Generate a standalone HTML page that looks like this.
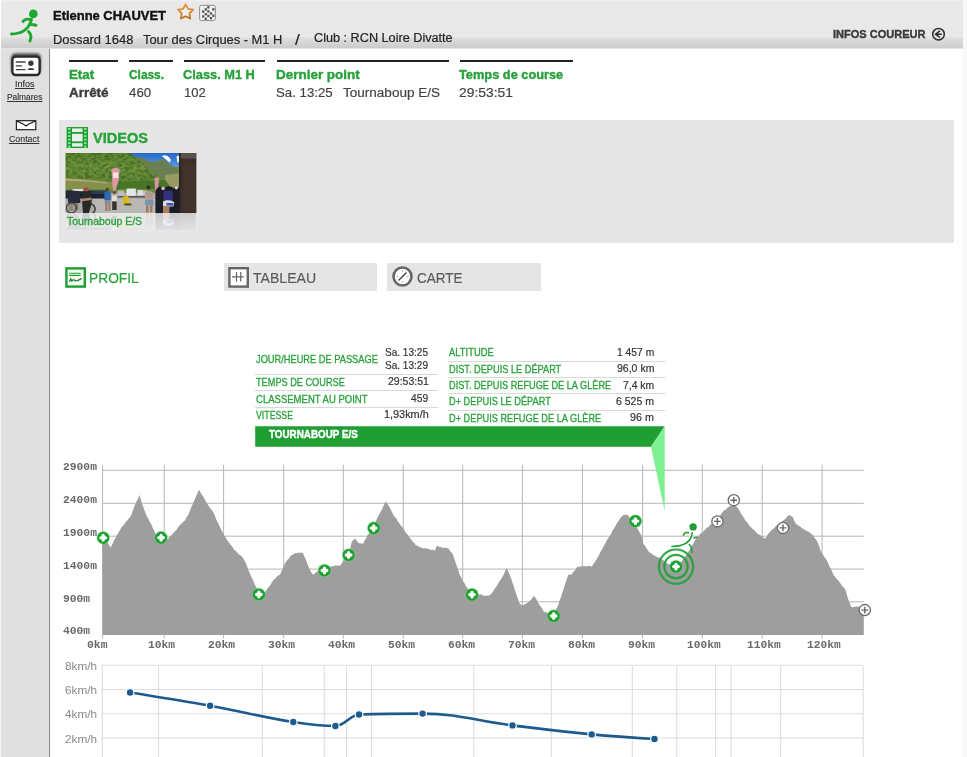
<!DOCTYPE html>
<html lang="fr"><head><meta charset="utf-8"><title>Etienne CHAUVET - Infos coureur</title>
<style>
*{box-sizing:border-box}
html,body{margin:0;padding:0}
body{width:967px;height:757px;overflow:hidden;background:#fff;position:relative;font-family:"Liberation Sans",sans-serif}
.a{position:absolute}
#hdr{left:1px;top:0;width:962px;height:49px;background:linear-gradient(#f2f2f2 0,#e9e9e9 1.5px,#e8e8e8 36.5px,#dddddd 38.5px,#d3d3d3 44px,#cccccc 48px,#e4e4e4 48px,#e4e4e4 49px)}
#side{left:0;top:49px;width:50px;height:708px;background:#e0e0e0;border-right:1px solid #8a8a8a;border-left:1px solid #f4f4f4}
#edge{left:963px;top:0;width:4px;height:757px;background:#f8f8f8}
.bl{height:2px;background:#222;top:60px}
#vid{left:58.5px;top:119.5px;width:895.5px;height:123px;background:#e6e6e6}
.tab{top:262.7px;height:28.6px;background:#e5e5e5}
.sep{height:1px;background:#d9d9d9}
#txt .t{position:absolute;white-space:nowrap;line-height:1;transform-origin:0 0;display:block}
svg{position:absolute;overflow:visible}
#txt .m{font-family:"Liberation Mono",monospace}

</style></head>
<body>
<div id="hdr" class="a"></div>
<div id="edge" class="a"></div>
<div id="side" class="a"></div>
<!-- info underlines -->
<div class="a bl" style="left:69.4px;width:48.9px"></div>
<div class="a bl" style="left:129.4px;width:43.5px"></div>
<div class="a bl" style="left:184px;width:81.4px"></div>
<div class="a bl" style="left:276.6px;width:172.1px"></div>
<div class="a bl" style="left:459.6px;width:113.8px"></div>
<div id="vid" class="a"></div>
<div class="a tab" style="left:223.7px;width:153.7px"></div>
<div class="a tab" style="left:387.3px;width:154px"></div>
<!-- tooltip separators -->
<div class="a sep" style="left:255px;top:374px;width:183px"></div>
<div class="a sep" style="left:255px;top:390.4px;width:183px"></div>
<div class="a sep" style="left:255px;top:407px;width:183px"></div>
<div class="a sep" style="left:448px;top:361px;width:216.6px"></div>
<div class="a sep" style="left:448px;top:377px;width:216.6px"></div>
<div class="a sep" style="left:448px;top:393px;width:216.6px"></div>
<div class="a sep" style="left:448px;top:409.5px;width:216.6px"></div>

<svg id="gfx" width="967" height="757" viewBox="0 0 967 757" style="left:0;top:0">
<path d="M102.5 470.3H863.8 M102.5 503.3H863.8 M102.5 536.2H863.8 M102.5 569.1H863.8 M102.5 601.8H863.8 M102.6 464.8V638.5 M164.2 464.8V638.5 M223.6 464.8V638.5 M283.7 464.8V638.5 M343.3 464.8V638.5 M403.2 464.8V638.5 M462.7 464.8V638.5 M522.4 464.8V638.5 M582.4 464.8V638.5 M642.6 464.8V638.5 M702.3 464.8V638.5 M762.2 464.8V638.5 M822.1 464.8V638.5" stroke="#b6b6b6" stroke-width="1" fill="none"/>
<path d="M102.6 635 L102.4 537.4 103.7 538.2 104.9 539.6 106.2 540.7 107.7 542.8 109.2 545.3 110.7 547.5 112.2 544.6 113.7 541.0 115.2 538.5 116.6 535.4 118.0 533.8 119.4 530.7 120.8 528.4 122.2 526.3 123.6 525.3 125.0 523.0 126.4 521.2 127.9 519.8 129.4 517.7 130.9 516.0 132.4 512.1 133.9 507.4 135.4 503.7 136.8 501.0 138.1 498.4 139.5 495.1 140.8 499.4 142.1 503.7 143.6 508.1 145.1 512.1 146.6 516.0 148.1 518.2 149.6 521.6 151.1 523.9 152.6 527.4 154.1 530.4 155.6 534.0 156.8 534.4 158.1 536.3 159.3 536.8 160.6 537.8 162.2 538.5 163.7 539.1 165.2 539.4 166.8 539.6 168.2 538.7 169.7 536.7 171.1 535.7 172.5 534.0 173.9 532.3 175.3 531.1 176.7 529.4 178.1 527.3 179.5 525.4 180.9 524.0 182.3 522.7 183.7 521.6 185.2 519.9 186.7 517.1 188.2 514.9 189.6 511.7 191.0 507.9 192.4 504.8 193.8 501.4 195.1 498.4 196.4 495.4 197.7 492.8 199.0 489.8 200.3 491.9 201.5 494.2 202.8 495.8 204.3 498.6 205.8 501.5 207.3 503.7 208.7 506.0 210.1 508.1 211.5 509.7 212.9 511.5 214.3 514.2 215.7 518.1 217.1 521.3 218.5 523.9 219.9 527.1 221.2 529.6 222.6 532.5 224.0 535.1 225.3 536.8 226.7 539.5 228.0 541.2 229.4 542.9 230.7 545.2 232.1 546.3 233.4 548.7 234.8 550.5 236.1 551.1 237.5 553.1 239.0 554.5 240.4 555.2 241.9 556.4 243.6 558.9 245.3 562.1 246.8 565.6 248.3 569.9 249.8 573.3 251.3 577.1 252.8 579.5 254.3 583.4 255.8 586.5 257.3 588.9 258.8 592.4 260.3 593.0 261.8 592.9 263.3 593.5 264.7 592.2 266.1 590.6 267.5 588.4 268.9 586.7 270.3 585.3 271.7 582.6 273.1 580.4 274.5 578.9 275.9 577.9 277.3 576.1 278.7 575.2 280.1 574.4 281.6 570.9 283.1 567.8 284.6 564.3 286.0 561.9 287.4 559.8 288.8 558.8 290.2 556.4 291.7 555.1 293.2 554.7 294.7 553.1 296.0 553.5 297.3 552.8 298.6 552.8 300.0 552.8 301.3 552.8 302.6 552.6 304.2 556.3 305.9 559.8 307.6 564.4 309.3 568.8 311.0 571.7 312.7 574.4 314.1 574.0 315.5 572.7 316.9 571.8 318.3 571.0 319.8 571.1 321.3 570.4 322.8 570.3 324.3 570.4 325.8 570.1 327.3 568.9 328.7 568.1 330.2 566.7 331.7 566.5 333.1 566.2 334.4 566.1 335.8 565.3 337.1 565.7 338.5 565.4 339.6 565.5 340.6 565.4 342.1 562.7 343.6 561.1 345.1 558.7 346.8 556.8 348.5 554.9 350.1 548.5 351.8 541.8 353.5 540.0 355.2 538.5 356.9 541.0 358.6 543.0 360.1 543.6 361.6 543.2 363.1 544.1 364.6 540.6 366.1 538.3 367.6 535.1 369.0 533.8 370.4 531.2 371.8 529.7 373.2 527.9 374.7 524.4 376.2 520.5 377.7 517.1 379.2 514.4 380.6 511.7 382.1 509.3 383.8 505.2 385.5 501.4 387.2 503.8 388.9 505.9 390.4 508.7 391.9 511.8 393.4 514.9 394.8 517.2 396.2 518.3 397.6 520.9 399.0 522.8 400.4 525.0 401.8 526.5 403.2 528.3 404.6 530.6 406.0 532.9 407.4 534.3 408.8 536.2 410.2 538.5 411.6 540.1 413.0 542.1 414.4 543.1 415.8 545.2 417.2 545.6 418.5 546.2 419.9 547.3 421.2 547.5 422.6 548.1 423.9 548.7 425.3 548.1 426.6 548.5 428.0 549.0 429.3 549.0 430.7 549.9 432.1 549.8 433.5 550.0 434.9 550.8 436.5 546.3 437.8 546.1 439.0 546.8 440.3 546.7 441.5 547.6 442.8 547.5 444.2 548.1 445.6 547.7 447.0 548.1 448.4 548.6 449.9 550.8 451.4 552.5 452.9 554.2 454.5 559.6 456.2 564.3 457.9 569.2 459.6 574.4 461.2 577.3 462.9 581.1 464.4 583.1 465.8 586.0 467.3 587.9 468.8 589.7 470.3 591.9 471.8 594.2 473.1 594.2 474.4 594.2 475.8 594.3 477.1 594.9 478.4 594.2 479.7 594.6 481.2 594.2 482.7 595.5 484.2 595.6 485.7 595.9 487.2 595.4 488.7 595.7 490.2 594.7 491.7 593.2 493.2 591.2 494.6 588.7 496.0 587.0 497.4 584.9 498.8 582.3 500.3 580.2 501.8 577.8 503.3 575.5 505.0 571.4 506.6 567.7 508.3 571.4 510.0 575.5 511.5 579.7 513.0 584.0 514.5 589.0 516.0 593.6 517.5 597.8 519.0 602.5 520.7 604.5 522.4 605.8 523.7 604.4 525.1 604.4 526.4 603.3 527.8 602.7 529.1 601.3 530.7 599.9 532.4 598.0 534.0 595.7 535.4 598.1 536.7 599.7 538.1 602.5 539.5 605.0 540.9 606.6 542.3 609.0 543.7 611.4 545.1 612.2 546.5 612.6 547.9 613.0 549.3 613.7 550.6 614.8 552.0 615.0 553.3 615.5 554.5 612.6 555.8 609.8 557.0 607.8 558.3 604.7 559.8 600.2 561.3 596.0 562.8 591.2 564.2 586.8 565.6 582.5 567.0 578.6 568.4 574.4 570.0 574.7 571.7 574.4 573.1 572.1 574.5 570.8 576.0 568.9 577.4 566.5 578.9 566.8 580.4 566.7 582.0 565.7 583.5 566.3 585.0 566.1 586.4 566.6 587.7 565.8 589.1 566.1 590.4 566.2 591.8 566.5 593.3 564.3 594.8 561.9 596.3 559.8 597.7 557.2 599.1 555.1 600.5 551.7 601.9 549.7 603.3 546.8 604.6 544.4 606.0 541.9 607.3 539.4 608.7 537.4 610.0 535.7 611.4 533.3 612.7 530.2 614.1 528.4 615.4 526.1 616.8 523.6 618.2 521.4 619.6 519.2 621.0 517.1 622.1 516.2 623.3 514.9 624.8 515.0 626.3 514.7 627.8 514.9 629.5 517.4 631.1 520.5 632.5 522.0 633.9 523.5 635.3 525.7 636.7 527.3 638.2 530.1 639.7 532.4 641.2 535.1 642.4 539.1 643.5 544.1 644.9 545.7 646.3 547.9 647.7 550.1 649.1 551.9 650.4 553.1 651.8 553.6 653.1 554.9 654.5 555.6 655.8 556.4 657.2 556.9 658.6 557.4 660.0 558.1 661.4 558.7 662.7 560.0 664.0 560.7 665.4 562.1 666.7 562.9 668.0 564.0 669.5 564.4 671.0 565.4 672.4 566.3 673.9 566.3 675.4 567.5 676.9 565.9 678.4 564.3 679.8 563.3 681.3 561.8 682.8 559.8 684.3 557.4 685.8 555.8 687.3 553.1 688.8 551.2 690.2 548.3 691.7 546.3 693.2 543.7 694.7 540.7 696.2 538.5 697.7 537.2 699.2 535.3 700.7 533.5 702.1 532.7 703.5 531.3 704.8 529.9 706.2 528.4 707.6 527.5 709.0 526.2 710.4 524.6 711.8 523.9 713.2 523.1 714.6 521.7 716.1 521.0 717.5 520.5 718.9 518.6 720.3 515.5 721.7 513.3 723.1 511.5 724.5 509.9 725.9 509.7 727.3 507.8 728.7 507.0 730.1 505.7 731.5 505.7 732.9 504.1 734.3 503.7 735.8 505.9 737.3 507.6 738.8 509.3 740.3 512.3 741.8 515.0 743.3 517.1 744.7 519.2 746.1 521.4 747.5 522.5 748.9 525.0 750.2 526.6 751.6 527.7 752.9 529.3 754.3 529.9 755.6 531.7 757.0 533.1 758.4 534.4 759.8 534.6 761.2 536.2 762.5 536.8 763.7 537.8 765.0 538.5 766.3 537.2 767.6 534.8 768.9 533.0 770.2 531.7 771.6 530.0 773.0 529.0 774.4 527.8 775.8 526.1 777.1 525.2 778.4 524.3 779.7 523.5 781.0 522.8 782.6 521.1 784.3 519.7 785.9 518.3 787.6 516.1 789.3 514.9 791.0 516.0 792.7 517.1 794.4 521.0 796.0 523.9 797.4 524.7 798.7 526.0 800.1 526.2 801.4 527.7 802.8 528.4 804.2 529.5 805.6 530.2 807.0 530.9 808.4 531.7 809.9 532.8 811.4 534.1 812.9 535.1 814.4 537.8 815.9 539.2 817.4 541.8 819.0 545.9 820.7 550.8 822.3 553.5 823.9 556.2 825.4 558.2 827.0 560.7 828.3 563.5 829.6 566.7 831.0 569.1 832.3 572.0 833.6 575.2 834.9 576.4 836.2 578.5 837.6 579.7 838.9 581.2 840.2 583.1 841.5 585.0 842.9 586.9 844.2 587.8 845.5 589.7 846.8 594.6 848.1 599.0 849.7 602.9 851.3 606.9 852.7 607.3 854.1 607.0 855.5 606.6 856.9 606.6 858.2 606.4 859.6 606.9 861.0 606.8 862.4 606.5 863.8 606.9 L863.8 635Z" fill="#9e9e9e"/>
<g transform="translate(103.2 537.8)"><circle r="6.9" fill="#6fd67e" opacity=".45"/><circle r="6.1" fill="#1f9e33"/><path d="M-2.3 0H2.3M0 -2.3V2.3" stroke="#f4fff4" stroke-width="3.3" stroke-linecap="round"/></g>
<g transform="translate(161.1 537.7)"><circle r="6.9" fill="#6fd67e" opacity=".45"/><circle r="6.1" fill="#1f9e33"/><path d="M-2.3 0H2.3M0 -2.3V2.3" stroke="#f4fff4" stroke-width="3.3" stroke-linecap="round"/></g>
<g transform="translate(258.9 594.5)"><circle r="6.9" fill="#6fd67e" opacity=".45"/><circle r="6.1" fill="#1f9e33"/><path d="M-2.3 0H2.3M0 -2.3V2.3" stroke="#f4fff4" stroke-width="3.3" stroke-linecap="round"/></g>
<g transform="translate(324.5 570.5)"><circle r="6.9" fill="#6fd67e" opacity=".45"/><circle r="6.1" fill="#1f9e33"/><path d="M-2.3 0H2.3M0 -2.3V2.3" stroke="#f4fff4" stroke-width="3.3" stroke-linecap="round"/></g>
<g transform="translate(348.6 555.0)"><circle r="6.9" fill="#6fd67e" opacity=".45"/><circle r="6.1" fill="#1f9e33"/><path d="M-2.3 0H2.3M0 -2.3V2.3" stroke="#f4fff4" stroke-width="3.3" stroke-linecap="round"/></g>
<g transform="translate(373.7 528.1)"><circle r="6.9" fill="#6fd67e" opacity=".45"/><circle r="6.1" fill="#1f9e33"/><path d="M-2.3 0H2.3M0 -2.3V2.3" stroke="#f4fff4" stroke-width="3.3" stroke-linecap="round"/></g>
<g transform="translate(472.0 594.6)"><circle r="6.9" fill="#6fd67e" opacity=".45"/><circle r="6.1" fill="#1f9e33"/><path d="M-2.3 0H2.3M0 -2.3V2.3" stroke="#f4fff4" stroke-width="3.3" stroke-linecap="round"/></g>
<g transform="translate(553.7 616.0)"><circle r="6.9" fill="#6fd67e" opacity=".45"/><circle r="6.1" fill="#1f9e33"/><path d="M-2.3 0H2.3M0 -2.3V2.3" stroke="#f4fff4" stroke-width="3.3" stroke-linecap="round"/></g>
<g transform="translate(635.4 521.1)"><circle r="6.9" fill="#6fd67e" opacity=".45"/><circle r="6.1" fill="#1f9e33"/><path d="M-2.3 0H2.3M0 -2.3V2.3" stroke="#f4fff4" stroke-width="3.3" stroke-linecap="round"/></g>
<g transform="translate(717.4 521.4)"><circle r="5.6" fill="#fff" stroke="#6a6a6a" stroke-width="1.3"/><path d="M-3.3 0H3.3M0 -3.3V3.3" stroke="#666" stroke-width="1.4"/></g>
<g transform="translate(733.8 500.2)"><circle r="5.6" fill="#fff" stroke="#6a6a6a" stroke-width="1.3"/><path d="M-3.3 0H3.3M0 -3.3V3.3" stroke="#666" stroke-width="1.4"/></g>
<g transform="translate(783.0 527.9)"><circle r="5.6" fill="#fff" stroke="#6a6a6a" stroke-width="1.3"/><path d="M-3.3 0H3.3M0 -3.3V3.3" stroke="#666" stroke-width="1.4"/></g>
<g transform="translate(864.8 610.1)"><circle r="5.6" fill="#fff" stroke="#6a6a6a" stroke-width="1.3"/><path d="M-3.3 0H3.3M0 -3.3V3.3" stroke="#666" stroke-width="1.4"/></g>
<g transform="translate(676.0 566.6)"><circle r="17.1" fill="none" stroke="#1f9e33" stroke-width="2.2" opacity=".9"/><circle r="11.7" fill="none" stroke="#1f9e33" stroke-width="2.2" opacity=".9"/></g>
<g transform="translate(676.0 566.6)"><circle r="6.9" fill="#6fd67e" opacity=".45"/><circle r="6.1" fill="#1f9e33"/><path d="M-2.3 0H2.3M0 -2.3V2.3" stroke="#f4fff4" stroke-width="3.3" stroke-linecap="round"/></g>
<g id="run2" fill="none" stroke="#1f9e33" stroke-width="1.5" stroke-linecap="round"><circle cx="693.1" cy="526.9" r="3.7" fill="#1f9e33" stroke="none"/><path d="M692.3 532.7C691.5 540 686 546.4 671.9 546.4M689.2 544.5C691.3 546.5 692.3 549 691.7 552.3M683.4 535.2C684.3 532.8 686.5 532.3 688.6 532.8M694 538L697 537.2"/></g>
<path d="M255.2 426.3H664.7L651 446.7H255.2Z" fill="#1f9e33"/>
<path d="M664.7 426.3L651 446.7L664.7 511.3Z" fill="#7df091"/>
<path d="M101 665.2H863.2 M101 689.5H863.2 M101 713.8H863.2 M101 738.0H863.2 M102.4 665.2V757 M158.5 665.2V757 M262.3 665.2V757 M324.3 665.2V757 M346.4 665.2V757 M371.4 665.2V757 M473.8 665.2V757 M551.3 665.2V757 M632.3 665.2V757 M676.8 665.2V757 M715.6 665.2V757 M731.1 665.2V757 M780.7 665.2V757 M863.2 665.2V757" stroke="#dedede" stroke-width="1.1" fill="none"/>
<path d="M130.1 692.5 C130.1 692.5 178.1 700.0 210.1 705.8 C243.4 711.8 260.0 716.6 293.3 722 C310.1 724.7 318.6 726.0 335.4 726 C344.8 726.0 349.6 715.4 359 714.5 C384.4 713.6 397.2 713.6 422.6 713.6 C458.6 713.6 476.5 721.0 512.5 725.4 C544.2 729.3 560.0 731.4 591.7 734.4 C616.8 736.8 654.5 739.0 654.5 739" stroke="#1d5a8e" stroke-width="2.6" fill="none" stroke-linecap="round"/>
<circle cx="130.1" cy="692.5" r="3.8" fill="#1d5a8e" stroke="#fff" stroke-width="1.2"/>
<circle cx="210.1" cy="705.8" r="3.8" fill="#1d5a8e" stroke="#fff" stroke-width="1.2"/>
<circle cx="293.3" cy="722" r="3.8" fill="#1d5a8e" stroke="#fff" stroke-width="1.2"/>
<circle cx="335.4" cy="726" r="3.8" fill="#1d5a8e" stroke="#fff" stroke-width="1.2"/>
<circle cx="359" cy="714.5" r="3.8" fill="#1d5a8e" stroke="#fff" stroke-width="1.2"/>
<circle cx="422.6" cy="713.6" r="3.8" fill="#1d5a8e" stroke="#fff" stroke-width="1.2"/>
<circle cx="512.5" cy="725.4" r="3.8" fill="#1d5a8e" stroke="#fff" stroke-width="1.2"/>
<circle cx="591.7" cy="734.4" r="3.8" fill="#1d5a8e" stroke="#fff" stroke-width="1.2"/>
<circle cx="654.5" cy="739" r="3.8" fill="#1d5a8e" stroke="#fff" stroke-width="1.2"/>
<g id="logo" fill="none" stroke="#1fa830" stroke-width="2.9" stroke-linecap="round" stroke-linejoin="round"><circle cx="33.3" cy="13.9" r="4.3" fill="#1fa830" stroke="none"/><path d="M31.5 19.5C29 29 22 34 11.5 34"/><path d="M28.5 31.5C31.5 34.5 31.5 37.5 30 41"/><path d="M23 21.5C24.5 19.2 27.5 18.8 30.5 19.5"/><path d="M31.5 24.5L36 25.2"/></g>
<defs><linearGradient id="sg" x1="0" y1="0" x2="0" y2="1"><stop offset="0" stop-color="#f09a3e"/><stop offset="1" stop-color="#b8721f"/></linearGradient></defs>
<path d="M185.6 4.2 L188.0 8.8 L193.1 9.7 L189.5 13.4 L190.2 18.5 L185.6 16.2 L181.0 18.5 L181.7 13.4 L178.1 9.7 L183.2 8.8Z" fill="#efeeec" stroke="url(#sg)" stroke-width="1.8" stroke-linejoin="round"/>
<g id="flag"><rect x="199.6" y="5.3" width="15.8" height="15.3" rx="2" fill="#f0f0f0" stroke="#8e8e8e" stroke-width="1"/>
<rect x="202" y="10.5" width="2.3" height="2.3" fill="#555"/>
<rect x="204.6" y="8.3" width="2.3" height="2.3" fill="#555"/>
<rect x="207.2" y="10.2" width="2.3" height="2.3" fill="#555"/>
<rect x="209.8" y="12.3" width="2.3" height="2.3" fill="#555"/>
<rect x="212.2" y="8.2" width="2.3" height="2.3" fill="#555"/>
<rect x="202" y="15.3" width="2.3" height="2.3" fill="#555"/>
<rect x="204.6" y="13" width="2.3" height="2.3" fill="#555"/>
<rect x="207.2" y="14.8" width="2.3" height="2.3" fill="#555"/>
<rect x="209.8" y="17" width="2.3" height="2.3" fill="#555"/>
<rect x="212.2" y="14.6" width="2.3" height="2.3" fill="#555"/>
<rect x="204.6" y="17.6" width="2.3" height="2.3" fill="#555"/>
<rect x="207.2" y="6.2" width="2.3" height="2.3" fill="#555"/>
</g>
<g fill="none" stroke="#2e2e2e" stroke-width="1.5"><circle cx="938.5" cy="34.2" r="5.8"/><path d="M940 30.9L935.5 34.2L940 37.5M935.8 34.2H941.8" stroke-linejoin="miter"/></g>
<defs><filter id="sh" x="-20%" y="-30%" width="140%" height="160%"><feGaussianBlur stdDeviation="1.1"/></filter></defs>
<rect x="11" y="53.2" width="30" height="21" rx="4.5" fill="#555" filter="url(#sh)"/>
<rect x="12.4" y="56.6" width="27.2" height="18.4" rx="3.2" fill="#fff" stroke="#2b2b2b" stroke-width="2.3"/>
<path d="M15.8 62H25.6M15.8 65.9H22M15.8 69.7H25.6" stroke="#444" stroke-width="1.3"/>
<circle cx="30.9" cy="63.2" r="2.7" fill="#3a3a3a"/><path d="M27.4 69.9C27.8 67.2 34 67.2 34.4 69.9Z" fill="#3a3a3a"/>
<rect x="16.4" y="120.7" width="19.4" height="9" fill="#fff" stroke="#222" stroke-width="1.2"/><path d="M16.6 120.9L23.5 124.2L26 126L28.5 124.2L35.6 120.9" fill="none" stroke="#222" stroke-width="1.2"/>
<g id="film"><rect x="66.6" y="127.0" width="21.4" height="21" fill="#1f9e33"/>
<rect x="72.0" y="128.4" width="10.6" height="3.6" fill="#e9efe9"/><rect x="72.0" y="133.8" width="10.6" height="7.6" fill="#e9efe9"/><rect x="72.0" y="143.2" width="10.6" height="3.4" fill="#e9efe9"/>
<rect x="68.19999999999999" y="128.00" width="2.2" height="1.9" fill="#8df09a"/><rect x="84.19999999999999" y="128.00" width="2.2" height="1.9" fill="#8df09a"/>
<rect x="68.19999999999999" y="131.55" width="2.2" height="1.9" fill="#8df09a"/><rect x="84.19999999999999" y="131.55" width="2.2" height="1.9" fill="#8df09a"/>
<rect x="68.19999999999999" y="135.10" width="2.2" height="1.9" fill="#8df09a"/><rect x="84.19999999999999" y="135.10" width="2.2" height="1.9" fill="#8df09a"/>
<rect x="68.19999999999999" y="138.65" width="2.2" height="1.9" fill="#8df09a"/><rect x="84.19999999999999" y="138.65" width="2.2" height="1.9" fill="#8df09a"/>
<rect x="68.19999999999999" y="142.20" width="2.2" height="1.9" fill="#8df09a"/><rect x="84.19999999999999" y="142.20" width="2.2" height="1.9" fill="#8df09a"/>
<rect x="68.19999999999999" y="145.75" width="2.2" height="1.9" fill="#8df09a"/><rect x="84.19999999999999" y="145.75" width="2.2" height="1.9" fill="#8df09a"/>
</g>
<rect x="66.4" y="268.4" width="18.4" height="18.2" fill="#f3fbf4" stroke="#1f9e33" stroke-width="2.4"/>
<path d="M69.3 273.2H80.7M69.3 275.4H80.7" stroke="#1f9e33" stroke-width="1.1"/><path d="M69.6 281.2L70.8 278.6L71.6 281.2L73.4 279.6L75.6 281L78 280.4L81.3 278.6" fill="none" stroke="#19802a" stroke-width="1.2" stroke-linejoin="round" stroke-linecap="round"/>
<rect x="229.4" y="268.2" width="18.4" height="18.4" fill="#fff" stroke="#666" stroke-width="2.4"/><path d="M236.5 272V281.6M240.7 272V281.6M232 276.9H243.8" stroke="#666" stroke-width="1.2"/>
<circle cx="402.5" cy="276.5" r="9" fill="#fff" stroke="#666" stroke-width="2.6"/><path d="M399 280L406 273" stroke="#444" stroke-width="1.5" stroke-linecap="round"/><path d="M396.5 276.5H398.5M406.5 276.5H408.5M402.5 270.5V272M402.5 281V282.5" stroke="#aaa" stroke-width="1"/>
<svg id="thumb" x="65.4" y="153" width="131.1" height="77.4" viewBox="0 0 131.1 77.4" style="overflow:hidden">
<defs><filter id="tb" x="-5%" y="-5%" width="110%" height="110%"><feGaussianBlur stdDeviation="0.7"/></filter><filter id="tn" x="0" y="0" width="100%" height="100%" color-interpolation-filters="sRGB"><feTurbulence type="fractalNoise" baseFrequency="0.25 0.35" numOctaves="3" seed="7" result="n"/><feColorMatrix in="n" type="matrix" values="0 0 0 0 0.13  0 0 0 0 0.28  0 0 0 0 0.06  3.2 0 0 0 -1.25"/></filter><linearGradient id="hg" x1="0" y1="0" x2="0" y2="1"><stop offset="0" stop-color="#5d8632"/><stop offset=".4" stop-color="#71933c"/><stop offset=".6" stop-color="#688c3a"/></linearGradient><linearGradient id="sk" x1="0" y1="0" x2="0" y2="1"><stop offset="0" stop-color="#2468c4"/><stop offset="1" stop-color="#5a98e0"/></linearGradient><clipPath id="tc"><rect x="0" y="0" width="131.1" height="60"/></clipPath><linearGradient id="rf" x1="0" y1="0" x2="0" y2="1"><stop offset="0" stop-color="#f2f2f2" stop-opacity=".8"/><stop offset="1" stop-color="#efefef" stop-opacity=".92"/></linearGradient></defs>
<defs><clipPath id="hc"><path d="M0 0H64L76 9L89 20L99 26L104 36H0Z"/></clipPath></defs>
<g clip-path="url(#tc)"><g filter="url(#tb)"><rect x="0" y="0" width="131.1" height="60" fill="url(#hg)"/>
<path d="M62 0H131V14H62Z" fill="url(#sk)"/>
<path d="M70 4L76 4.5L84 8L90 9L96.6 5.4L104 11L114 17V36H84L74 12Z" fill="#6b7d52"/>
<path d="M100 22L114 20V34H98Z" fill="#979a62"/>
<path d="M96.5 3C99 1.5 103 2.5 105.6 7L104 9.5L100 6Z" fill="#f6f9ff"/><path d="M111 3.5L114.6 2V10L112 9Z" fill="#eef3fc"/>
<path d="M0 0H64L76 9L89 20L99 26L104 36H0Z" fill="url(#hg)"/>
<rect x="0" y="0" width="104" height="36" filter="url(#tn)" clip-path="url(#hc)" opacity=".45"/>
<path d="M0 25L30 27L52 30L62 33L50 36H0Z" fill="#87904c"/><path d="M0 25.6L20 27L42 29.5L42 30.6L20 28.6L0 27.6Z" fill="#b3a97c"/>
<path d="M52 29L100 27L106 36H50Z" fill="#467427"/>
<rect x="0" y="40" width="131.1" height="20" fill="#adaba8"/><path d="M28 46H114V60H28Z" fill="#bab8b4"/>
<path d="M0 37.5H42V45.5H0Z" fill="#1f2430"/><path d="M7 36H18V38.2H7Z" fill="#d8dadd"/><path d="M26 38H40V41H26Z" fill="#2b3a55"/>
<rect x="52" y="37.5" width="7" height="6" rx="1" fill="#b9bdc2"/><rect x="61" y="35.6" width="9.5" height="7.2" rx="1" fill="#e6e6ea"/><rect x="72" y="37" width="6" height="5.6" rx="1" fill="#dcdde0"/><rect x="78" y="37.6" width="4" height="4.6" fill="#c8c8cc"/>
<path d="M52 43H82V44.6H52Z" fill="#55585c"/>
<path d="M46 16.5C48 14.6 52 14.6 54.3 16L53.4 27L50 37.8L47.6 37.8Z" fill="#dc9aa4"/><path d="M47.6 19.5H52.8V25H47.8Z" fill="#f4e4e4"/>
<path d="M89 25.5C90.5 24 93 24 94 25.5L92.4 36L90 41Z" fill="#d992a2"/>
<path d="M1.5 39C4 37 12 37 14.5 40L15 50L3 50Z" fill="#262b3a"/><path d="M3 50H8V58H3Z" fill="#8d8778"/><path d="M9 50H13V57H9Z" fill="#7f7a6d"/>
<circle cx="6" cy="55" r="5" fill="none" stroke="#4c4c4a" stroke-width="1.5"/><circle cx="24.5" cy="56" r="5.2" fill="none" stroke="#40403e" stroke-width="1.6"/>
<path d="M17 40C19 37.6 25 37.6 26.6 41L26 51.5L23.5 60H17.5L16.8 50Z" fill="#262c26"/><path d="M18.2 35.4C19.4 33.8 22.4 33.8 23.3 35.8L23 38.2H18.6Z" fill="#b3483e"/>
<path d="M15 46L26 44.5L26 47L15 48.6Z" fill="#b58670"/>
<circle cx="42" cy="36.3" r="1.7" fill="#5a4638"/><path d="M39 38.4H45.4V47.4H39Z" fill="#2e68b2"/><path d="M39.4 47.4H45.2V51.6H39.4Z" fill="#8a8a92"/><path d="M39.8 51.6H42V58H39.8ZM43 51.6H45V58H43Z" fill="#9c7b62"/>
<circle cx="49" cy="39.6" r="1.6" fill="#6b4a3c"/><path d="M46.6 42.5H51.4V48.4H46.6Z" fill="#e4dcd4"/><path d="M46.8 48.4H51.2V57H46.8Z" fill="#34302e"/>
<path d="M57 44L62 42.5L64.2 46L64 51.4H58Z" fill="#d6ba20"/><path d="M59 50.5H66V52.4H59Z" fill="#4a4632"/>
<circle cx="83" cy="34.5" r="2" fill="#3a2c26"/><path d="M79.4 39.4C81 37.6 86 37.6 88 39.6L87.6 47.4H79.6Z" fill="#b29c92"/><path d="M79.6 47H88V52.4H79.6Z" fill="#7a92aa"/><path d="M80.6 52.4H83.2V59.4H80.6ZM84.6 52.4H87V59.4H84.6Z" fill="#a27a62"/>
<path d="M90 38C92 33 97 32.6 99 35.6C101 32.6 106 32.6 108 35.6L113.6 34.6V60H90Z" fill="#1c1c27"/>
<path d="M98 37.6H107.4V48.4H98Z" fill="#30317c"/><path d="M97.6 48.4C101 46.4 107 46.8 109 49.6L108 53.6H97.6Z" fill="#dadaea"/><path d="M101 50H108V52.6H101Z" fill="#3a55b0"/><path d="M97.6 53H104V60H97.6Z" fill="#aa8262"/>
<circle cx="97.6" cy="35.4" r="1.8" fill="#c8bcb8"/><circle cx="111" cy="34.8" r="1.6" fill="#d8d4d0"/>
<rect x="113.6" y="0" width="17.6" height="60" fill="#3c2f2b"/><rect x="113.6" y="0" width="17.6" height="5.5" fill="#5a514b"/><rect x="113.6" y="0" width="1.6" height="60" fill="#2c2421"/><path d="M118 10H130V58H118Z" fill="#45332e" opacity=".8"/></g></g>
<g clip-path="url(#rc)"><g transform="translate(0 120) scale(1 -1)"><g filter="url(#tb)"><rect x="0" y="0" width="131.1" height="60" fill="url(#hg)"/>
<path d="M62 0H131V14H62Z" fill="url(#sk)"/>
<path d="M70 4L76 4.5L84 8L90 9L96.6 5.4L104 11L114 17V36H84L74 12Z" fill="#6b7d52"/>
<path d="M100 22L114 20V34H98Z" fill="#979a62"/>
<path d="M96.5 3C99 1.5 103 2.5 105.6 7L104 9.5L100 6Z" fill="#f6f9ff"/><path d="M111 3.5L114.6 2V10L112 9Z" fill="#eef3fc"/>
<path d="M0 0H64L76 9L89 20L99 26L104 36H0Z" fill="url(#hg)"/>
<rect x="0" y="0" width="104" height="36" filter="url(#tn)" clip-path="url(#hc)" opacity=".45"/>
<path d="M0 25L30 27L52 30L62 33L50 36H0Z" fill="#87904c"/><path d="M0 25.6L20 27L42 29.5L42 30.6L20 28.6L0 27.6Z" fill="#b3a97c"/>
<path d="M52 29L100 27L106 36H50Z" fill="#467427"/>
<rect x="0" y="40" width="131.1" height="20" fill="#adaba8"/><path d="M28 46H114V60H28Z" fill="#bab8b4"/>
<path d="M0 37.5H42V45.5H0Z" fill="#1f2430"/><path d="M7 36H18V38.2H7Z" fill="#d8dadd"/><path d="M26 38H40V41H26Z" fill="#2b3a55"/>
<rect x="52" y="37.5" width="7" height="6" rx="1" fill="#b9bdc2"/><rect x="61" y="35.6" width="9.5" height="7.2" rx="1" fill="#e6e6ea"/><rect x="72" y="37" width="6" height="5.6" rx="1" fill="#dcdde0"/><rect x="78" y="37.6" width="4" height="4.6" fill="#c8c8cc"/>
<path d="M52 43H82V44.6H52Z" fill="#55585c"/>
<path d="M46 16.5C48 14.6 52 14.6 54.3 16L53.4 27L50 37.8L47.6 37.8Z" fill="#dc9aa4"/><path d="M47.6 19.5H52.8V25H47.8Z" fill="#f4e4e4"/>
<path d="M89 25.5C90.5 24 93 24 94 25.5L92.4 36L90 41Z" fill="#d992a2"/>
<path d="M1.5 39C4 37 12 37 14.5 40L15 50L3 50Z" fill="#262b3a"/><path d="M3 50H8V58H3Z" fill="#8d8778"/><path d="M9 50H13V57H9Z" fill="#7f7a6d"/>
<circle cx="6" cy="55" r="5" fill="none" stroke="#4c4c4a" stroke-width="1.5"/><circle cx="24.5" cy="56" r="5.2" fill="none" stroke="#40403e" stroke-width="1.6"/>
<path d="M17 40C19 37.6 25 37.6 26.6 41L26 51.5L23.5 60H17.5L16.8 50Z" fill="#262c26"/><path d="M18.2 35.4C19.4 33.8 22.4 33.8 23.3 35.8L23 38.2H18.6Z" fill="#b3483e"/>
<path d="M15 46L26 44.5L26 47L15 48.6Z" fill="#b58670"/>
<circle cx="42" cy="36.3" r="1.7" fill="#5a4638"/><path d="M39 38.4H45.4V47.4H39Z" fill="#2e68b2"/><path d="M39.4 47.4H45.2V51.6H39.4Z" fill="#8a8a92"/><path d="M39.8 51.6H42V58H39.8ZM43 51.6H45V58H43Z" fill="#9c7b62"/>
<circle cx="49" cy="39.6" r="1.6" fill="#6b4a3c"/><path d="M46.6 42.5H51.4V48.4H46.6Z" fill="#e4dcd4"/><path d="M46.8 48.4H51.2V57H46.8Z" fill="#34302e"/>
<path d="M57 44L62 42.5L64.2 46L64 51.4H58Z" fill="#d6ba20"/><path d="M59 50.5H66V52.4H59Z" fill="#4a4632"/>
<circle cx="83" cy="34.5" r="2" fill="#3a2c26"/><path d="M79.4 39.4C81 37.6 86 37.6 88 39.6L87.6 47.4H79.6Z" fill="#b29c92"/><path d="M79.6 47H88V52.4H79.6Z" fill="#7a92aa"/><path d="M80.6 52.4H83.2V59.4H80.6ZM84.6 52.4H87V59.4H84.6Z" fill="#a27a62"/>
<path d="M90 38C92 33 97 32.6 99 35.6C101 32.6 106 32.6 108 35.6L113.6 34.6V60H90Z" fill="#1c1c27"/>
<path d="M98 37.6H107.4V48.4H98Z" fill="#30317c"/><path d="M97.6 48.4C101 46.4 107 46.8 109 49.6L108 53.6H97.6Z" fill="#dadaea"/><path d="M101 50H108V52.6H101Z" fill="#3a55b0"/><path d="M97.6 53H104V60H97.6Z" fill="#aa8262"/>
<circle cx="97.6" cy="35.4" r="1.8" fill="#c8bcb8"/><circle cx="111" cy="34.8" r="1.6" fill="#d8d4d0"/>
<rect x="113.6" y="0" width="17.6" height="60" fill="#3c2f2b"/><rect x="113.6" y="0" width="17.6" height="5.5" fill="#5a514b"/><rect x="113.6" y="0" width="1.6" height="60" fill="#2c2421"/><path d="M118 10H130V58H118Z" fill="#45332e" opacity=".8"/></g></g></g>
<defs><clipPath id="rc"><rect x="0.8" y="60" width="129.6" height="17"/></clipPath></defs>
<rect x="0" y="60" width="131.1" height="17.4" fill="url(#rf)"/>
</svg>
</svg>
<div id="txt">
<span class="t" style="left:52.8px;top:9.0px;font-size:13px;font-weight:700;color:#111;-webkit-text-stroke:0.4px #111;transform:scaleX(0.9959);">Etienne CHAUVET</span>
<span class="t" style="left:52.8px;top:33.9px;font-size:12.5px;color:#222;-webkit-text-stroke:0.18px #222;transform:scaleX(1.0318);">Dossard 1648</span>
<span class="t" style="left:143.0px;top:33.9px;font-size:12.5px;color:#222;-webkit-text-stroke:0.18px #222;transform:scaleX(1.0283);">Tour des Cirques - M1 H</span>
<span class="t" style="left:294.5px;top:32.4px;font-size:15.5px;color:#222;-webkit-text-stroke:0.18px #222;transform:scaleX(1.1200);">/</span>
<span class="t" style="left:313.7px;top:32.3px;font-size:12px;color:#222;-webkit-text-stroke:0.18px #222;transform:scaleX(1.0553);">Club : RCN Loire Divatte</span>
<span class="t" style="left:833.0px;top:28.3px;font-size:11.6px;font-weight:700;color:#3a3a3a;-webkit-text-stroke:0.4px #3a3a3a;transform:scaleX(0.9513);">INFOS COUREUR</span>
<span class="t" style="left:68.5px;top:68.0px;font-size:13px;font-weight:700;color:#27a23a;-webkit-text-stroke:0.4px #27a23a;transform:scaleX(1.0235);">Etat</span>
<span class="t" style="left:68.5px;top:86.1px;font-size:13px;font-weight:700;color:#3a3a3a;-webkit-text-stroke:0.4px #3a3a3a;transform:scaleX(1.0325);">Arrêté</span>
<span class="t" style="left:128.5px;top:68.0px;font-size:13px;font-weight:700;color:#27a23a;-webkit-text-stroke:0.4px #27a23a;transform:scaleX(0.9146);">Class.</span>
<span class="t" style="left:128.5px;top:86.1px;font-size:13px;color:#444;-webkit-text-stroke:0.18px #444;transform:scaleX(1.0201);">460</span>
<span class="t" style="left:183.1px;top:68.0px;font-size:13px;font-weight:700;color:#27a23a;-webkit-text-stroke:0.4px #27a23a;transform:scaleX(0.9843);">Class. M1 H</span>
<span class="t" style="left:183.9px;top:86.1px;font-size:13px;color:#444;-webkit-text-stroke:0.18px #444;transform:scaleX(1.0063);">102</span>
<span class="t" style="left:275.7px;top:68.0px;font-size:13px;font-weight:700;color:#27a23a;-webkit-text-stroke:0.4px #27a23a;transform:scaleX(1.0350);">Dernier point</span>
<span class="t" style="left:275.7px;top:86.1px;font-size:13px;color:#444;-webkit-text-stroke:0.18px #444;transform:scaleX(1.0177);">Sa. 13:25</span>
<span class="t" style="left:342.5px;top:86.1px;font-size:13px;color:#444;-webkit-text-stroke:0.18px #444;transform:scaleX(1.0408);">Tournaboup E/S</span>
<span class="t" style="left:458.7px;top:68.0px;font-size:13px;font-weight:700;color:#27a23a;-webkit-text-stroke:0.4px #27a23a;transform:scaleX(0.9837);">Temps de course</span>
<span class="t" style="left:458.7px;top:86.1px;font-size:13px;color:#444;-webkit-text-stroke:0.18px #444;transform:scaleX(1.0658);">29:53:51</span>
<span class="t" style="left:92.8px;top:130.8px;font-size:14px;font-weight:700;color:#27a23a;-webkit-text-stroke:0.4px #27a23a;transform:scaleX(1.0381);">VIDEOS</span>
<span class="t" style="left:66.6px;top:216.3px;font-size:11px;color:#27a23a;-webkit-text-stroke:0.3px #27a23a;transform:scaleX(0.9517);">Tournaboup E/S</span>
<span class="t" style="left:89.4px;top:270.7px;font-size:14.4px;color:#27a23a;-webkit-text-stroke:0.18px #27a23a;transform:scaleX(0.9571);">PROFIL</span>
<span class="t" style="left:253.4px;top:270.7px;font-size:14.4px;color:#5a5a5a;-webkit-text-stroke:0.18px #5a5a5a;transform:scaleX(0.9773);">TABLEAU</span>
<span class="t" style="left:416.9px;top:270.7px;font-size:14.4px;color:#5a5a5a;-webkit-text-stroke:0.18px #5a5a5a;transform:scaleX(0.9369);">CARTE</span>
<span class="t" style="left:255.5px;top:354.1px;font-size:10.7px;color:#27a23a;-webkit-text-stroke:0.3px #27a23a;transform:scaleX(0.8669);">JOUR/HEURE DE PASSAGE</span>
<span class="t" style="left:385.4px;top:347.9px;font-size:10.2px;color:#333;-webkit-text-stroke:0.18px #333;transform:scaleX(0.9860);">Sa. 13:25</span>
<span class="t" style="left:385.4px;top:361.4px;font-size:10.2px;color:#333;-webkit-text-stroke:0.18px #333;transform:scaleX(0.9860);">Sa. 13:29</span>
<span class="t" style="left:255.5px;top:377.0px;font-size:10.7px;color:#27a23a;-webkit-text-stroke:0.3px #27a23a;transform:scaleX(0.8590);">TEMPS DE COURSE</span>
<span class="t" style="left:387.5px;top:377.4px;font-size:10.2px;color:#333;-webkit-text-stroke:0.18px #333;transform:scaleX(1.0318);">29:53:51</span>
<span class="t" style="left:255.5px;top:393.6px;font-size:10.7px;color:#27a23a;-webkit-text-stroke:0.3px #27a23a;transform:scaleX(0.8916);">CLASSEMENT AU POINT</span>
<span class="t" style="left:411.3px;top:394.1px;font-size:10.2px;color:#333;-webkit-text-stroke:0.18px #333;transform:scaleX(1.0068);">459</span>
<span class="t" style="left:255.5px;top:409.5px;font-size:10.7px;color:#27a23a;-webkit-text-stroke:0.3px #27a23a;transform:scaleX(0.8209);">VITESSE</span>
<span class="t" style="left:383.7px;top:410.0px;font-size:10.2px;color:#333;-webkit-text-stroke:0.18px #333;transform:scaleX(1.0670);">1,93km/h</span>
<span class="t" style="left:269.3px;top:429.7px;font-size:10px;font-weight:700;color:#fff;-webkit-text-stroke:0.4px #fff;transform:scaleX(0.9844);">TOURNABOUP E/S</span>
<span class="t" style="left:448.7px;top:347.3px;font-size:10.7px;color:#27a23a;-webkit-text-stroke:0.3px #27a23a;transform:scaleX(0.8797);">ALTITUDE</span>
<span class="t" style="left:616.7px;top:347.8px;font-size:10.2px;color:#333;-webkit-text-stroke:0.18px #333;transform:scaleX(1.0137);">1 457 m</span>
<span class="t" style="left:448.7px;top:363.9px;font-size:10.7px;color:#27a23a;-webkit-text-stroke:0.3px #27a23a;transform:scaleX(0.8617);">DIST. DEPUIS LE DÉPART</span>
<span class="t" style="left:616.7px;top:364.4px;font-size:10.2px;color:#333;-webkit-text-stroke:0.18px #333;transform:scaleX(1.0322);">96,0 km</span>
<span class="t" style="left:448.7px;top:380.0px;font-size:10.7px;color:#27a23a;-webkit-text-stroke:0.3px #27a23a;transform:scaleX(0.8585);">DIST. DEPUIS REFUGE DE LA GLÈRE</span>
<span class="t" style="left:622.9px;top:380.5px;font-size:10.2px;color:#333;-webkit-text-stroke:0.18px #333;transform:scaleX(1.0209);">7,4 km</span>
<span class="t" style="left:448.7px;top:396.4px;font-size:10.7px;color:#27a23a;-webkit-text-stroke:0.3px #27a23a;transform:scaleX(0.8625);">D+ DEPUIS LE DÉPART</span>
<span class="t" style="left:616.2px;top:396.9px;font-size:10.2px;color:#333;-webkit-text-stroke:0.18px #333;transform:scaleX(1.0300);">6 525 m</span>
<span class="t" style="left:448.7px;top:412.8px;font-size:10.7px;color:#27a23a;-webkit-text-stroke:0.3px #27a23a;transform:scaleX(0.8616);">D+ DEPUIS REFUGE DE LA GLÈRE</span>
<span class="t" style="left:630.3px;top:413.3px;font-size:10.2px;color:#333;-webkit-text-stroke:0.18px #333;transform:scaleX(1.0512);">96 m</span>
<span class="t" style="left:14.9px;top:81.1px;font-size:8.2px;color:#333;text-decoration:underline;-webkit-text-stroke:0.12px #333;transform:scaleX(1.0951);">Infos</span>
<span class="t" style="left:6.9px;top:94.4px;font-size:8.2px;color:#333;text-decoration:underline;-webkit-text-stroke:0.12px #333;transform:scaleX(1.0220);">Palmares</span>
<span class="t" style="left:9.2px;top:136.1px;font-size:8.2px;color:#333;text-decoration:underline;-webkit-text-stroke:0.12px #333;transform:scaleX(1.0757);">Contact</span>
<span class="t m" style="left:62.8px;top:462.3px;font-size:11.8px;font-weight:700;color:#6a6a6a;transform:scaleX(0.9587);">2900m</span>
<span class="t m" style="left:62.8px;top:495.3px;font-size:11.8px;font-weight:700;color:#6a6a6a;transform:scaleX(0.9587);">2400m</span>
<span class="t m" style="left:62.8px;top:528.4px;font-size:11.8px;font-weight:700;color:#6a6a6a;transform:scaleX(0.9587);">1900m</span>
<span class="t m" style="left:62.8px;top:561.1px;font-size:11.8px;font-weight:700;color:#6a6a6a;transform:scaleX(0.9587);">1400m</span>
<span class="t m" style="left:62.8px;top:594.1px;font-size:11.8px;font-weight:700;color:#6a6a6a;transform:scaleX(0.9582);">900m</span>
<span class="t m" style="left:62.8px;top:626.4px;font-size:11.8px;font-weight:700;color:#6a6a6a;transform:scaleX(0.9582);">400m</span>
<span class="t m" style="left:86.7px;top:640.4px;font-size:11.8px;font-weight:700;color:#6a6a6a;transform:scaleX(0.9691);">0km</span>
<span class="t m" style="left:147.6px;top:640.4px;font-size:11.8px;font-weight:700;color:#6a6a6a;transform:scaleX(0.9582);">10km</span>
<span class="t m" style="left:207.6px;top:640.4px;font-size:11.8px;font-weight:700;color:#6a6a6a;transform:scaleX(0.9582);">20km</span>
<span class="t m" style="left:267.6px;top:640.4px;font-size:11.8px;font-weight:700;color:#6a6a6a;transform:scaleX(0.9582);">30km</span>
<span class="t m" style="left:327.6px;top:640.4px;font-size:11.8px;font-weight:700;color:#6a6a6a;transform:scaleX(0.9582);">40km</span>
<span class="t m" style="left:387.6px;top:640.4px;font-size:11.8px;font-weight:700;color:#6a6a6a;transform:scaleX(0.9582);">50km</span>
<span class="t m" style="left:447.6px;top:640.4px;font-size:11.8px;font-weight:700;color:#6a6a6a;transform:scaleX(0.9582);">60km</span>
<span class="t m" style="left:507.6px;top:640.4px;font-size:11.8px;font-weight:700;color:#6a6a6a;transform:scaleX(0.9582);">70km</span>
<span class="t m" style="left:567.6px;top:640.4px;font-size:11.8px;font-weight:700;color:#6a6a6a;transform:scaleX(0.9582);">80km</span>
<span class="t m" style="left:627.6px;top:640.4px;font-size:11.8px;font-weight:700;color:#6a6a6a;transform:scaleX(0.9582);">90km</span>
<span class="t m" style="left:686.6px;top:640.4px;font-size:11.8px;font-weight:700;color:#6a6a6a;transform:scaleX(0.9516);">100km</span>
<span class="t m" style="left:746.6px;top:640.4px;font-size:11.8px;font-weight:700;color:#6a6a6a;transform:scaleX(0.9516);">110km</span>
<span class="t m" style="left:806.6px;top:640.4px;font-size:11.8px;font-weight:700;color:#6a6a6a;transform:scaleX(0.9516);">120km</span>
<span class="t" style="left:64.6px;top:659.7px;font-size:11.6px;color:#8a8a8a;transform:scaleX(1.0142);">8km/h</span>
<span class="t" style="left:64.6px;top:684.0px;font-size:11.6px;color:#8a8a8a;transform:scaleX(1.0142);">6km/h</span>
<span class="t" style="left:64.6px;top:708.3px;font-size:11.6px;color:#8a8a8a;transform:scaleX(1.0142);">4km/h</span>
<span class="t" style="left:64.6px;top:732.5px;font-size:11.6px;color:#8a8a8a;transform:scaleX(1.0142);">2km/h</span>
</div>
</body></html>
